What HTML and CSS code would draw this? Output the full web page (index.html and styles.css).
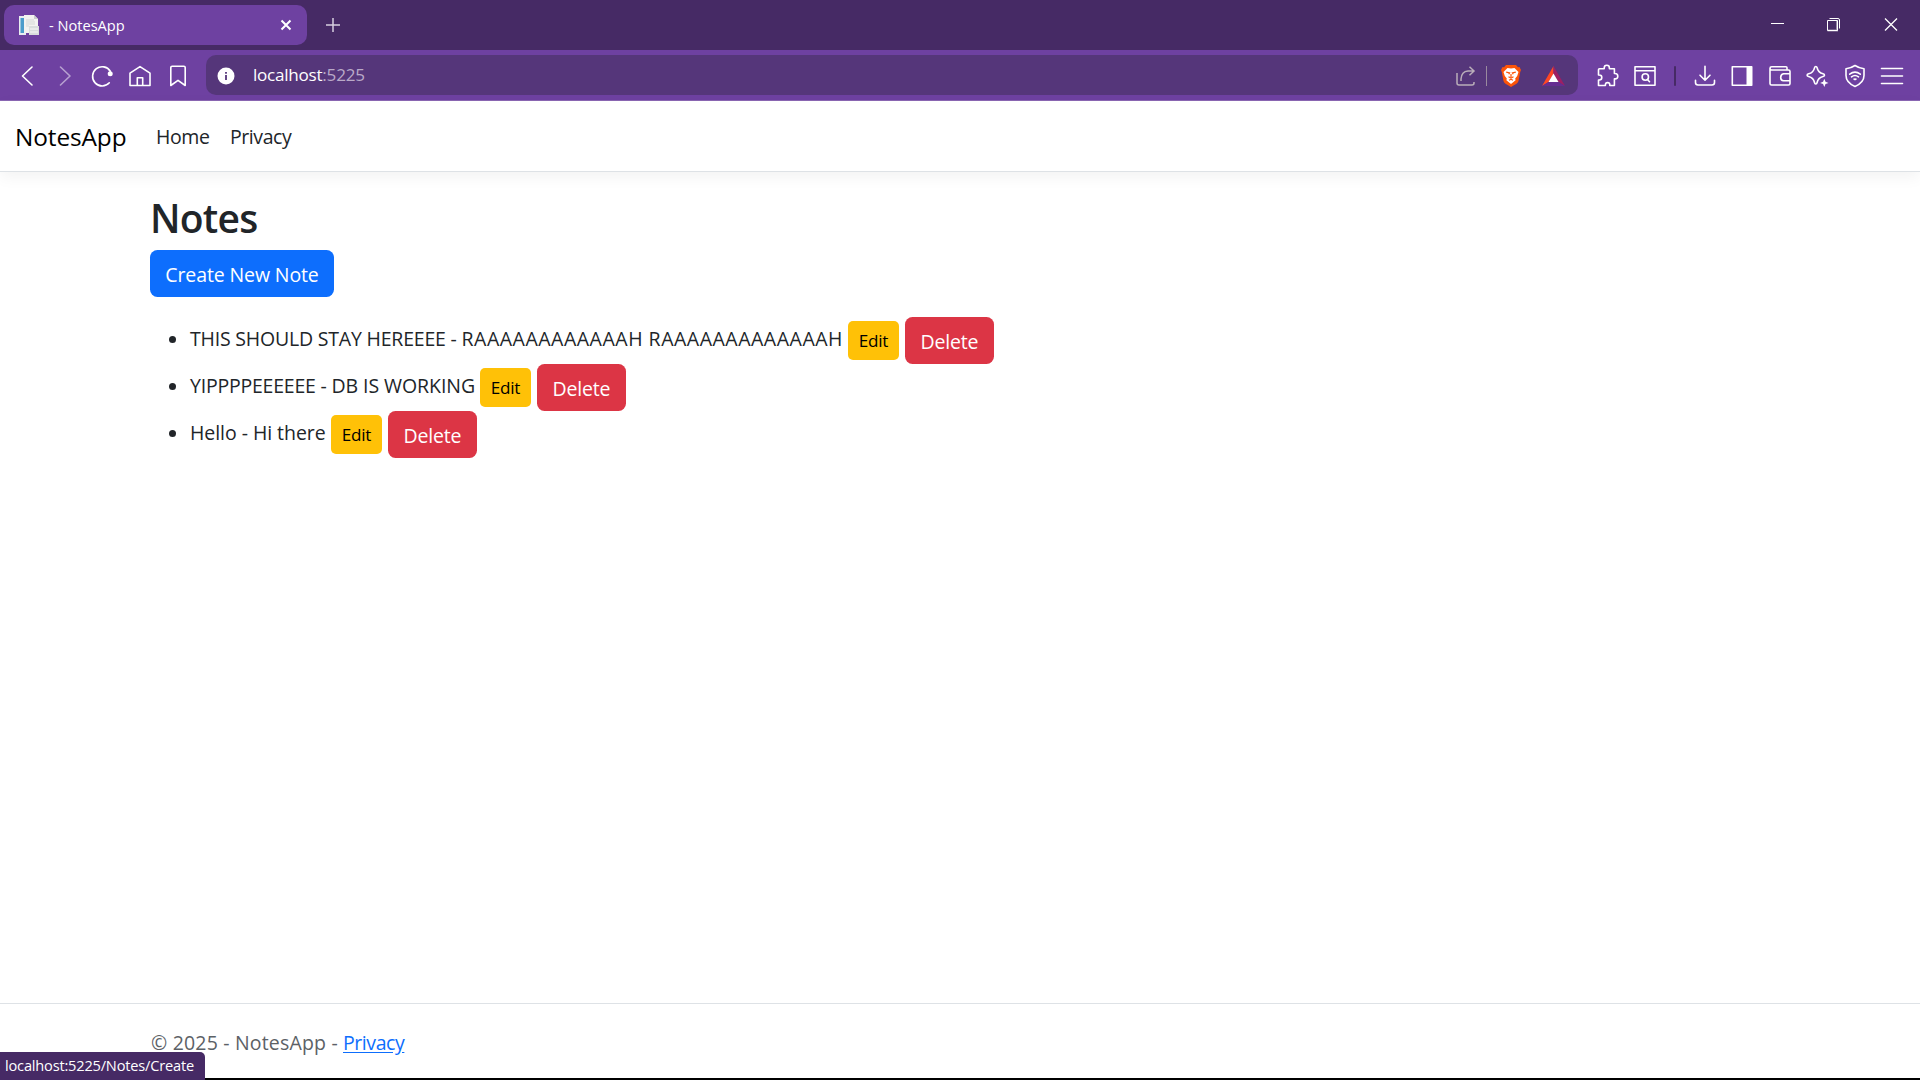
FILE: index.html
```
<!DOCTYPE html>
<html lang="en">
<head>
<meta charset="utf-8">
<title>- NotesApp</title>
<link rel="stylesheet" href="styles.css">
</head>
<body>
<div class="titlebar">
  <div class="tab">
    <svg class="favicon" width="20" height="20" viewBox="0 0 20 20"><path d="M0 1h7v19H0z" fill="#e9edf0"/><path d="M1.500 3H5v15H1.500z" fill="#4b9ccb"/><path d="M5 0h10l4 4v14H5z" fill="#f2f2f0"/><path d="M15 0v4h4z" fill="#c9cdcc"/><path d="M7 5h8M7 7h9M7 9h9M7 11h3" stroke="#d5d8d7"/><path d="M10 11h10v9H10z" fill="#d9dddd"/><path d="M11 14h8M11 17h8" stroke="#f7f7f7"/></svg>
    <span class="tab-title">- NotesApp</span>
    <svg class="tab-close" width="12" height="12" viewBox="0 0 12 12"><path d="M1.500 1.500l9 9M10.500 1.500l-9 9" stroke="#fff" stroke-width="2"/></svg>
  </div>
  <svg class="new-tab" width="14" height="14" viewBox="0 0 14 14"><path d="M0 7h14M7 0v14" stroke="#d8d0e0" stroke-width="1.500"/></svg>
  <div class="window-controls">
    <svg width="57" height="50" viewBox="0 0 57 50"><path d="M22 23.500h13" stroke="#fff"/></svg>
    <svg width="57" height="50" viewBox="0 0 57 50" fill="none" stroke="#fff"><path d="M31 20.500v10h-9.500" stroke="#9b8bab" stroke-width="2"/><path d="M21.500 20.500h10v10h-10zM23.500 18.500h8.500q1.500 0 1.500 1.500v8.500"/></svg>
    <svg width="57" height="50" viewBox="0 0 57 50"><path d="M22 18.500l12 12M34 18.500l-12 12" stroke="#fff" stroke-width="1.300"/></svg>
  </div>
</div>
<div class="toolbar">
  <div class="nav-icons">
    <svg viewBox="0 0 24 24"><path d="M17 3L7.500 12 17 21"/></svg>
    <svg class="dim" viewBox="0 0 24 24"><path d="M7.500 3L17 12 7.500 21"/></svg>
    <svg viewBox="0 0 24 24"><path d="M20.300 7.200A9.600 9.600 0 1 0 19.300 18.800"/><circle cx="20.200" cy="9.800" r="2.500" fill="#fff" stroke="none"/></svg>
    <svg viewBox="0 0 24 24"><path d="M2 9.200L12 2.600l10 6.600v12.300H2zM9.300 21.500v-7.700h5.400v7.700"/></svg>
    <svg viewBox="0 0 24 24"><path d="M4.800 3.500q0-1.300 1.300-1.300h11.800q1.300 0 1.300 1.300v18L12 16.300l-7.200 5.200z"/></svg>
  </div>
  <div class="address">
    <svg class="info" width="18" height="18" viewBox="0 0 18 18"><circle cx="9" cy="9" r="8.500" fill="#fff"/><path d="M9 8v5M9 5v1.800" stroke="#55367a" stroke-width="1.800"/></svg>
    <span class="host">localhost<span class="port">:5225</span></span>
    <svg class="share" width="20" height="20" viewBox="0 0 20 20" fill="none" stroke="#b9adb9" stroke-width="1.500"><path d="M1 7v10q0 2 2 2h13q2 0 2-2v-1M5 15V13Q5.500 5.500 12 5h6M13.500.800L18 5l-4.500 4.200"/></svg>
    <span class="address-sep"></span>
    <svg class="brave" width="20" height="23" viewBox="0 0 20 23"><path d="M5 1h10l2 2.300 1.500-.2L20 6l-.8 2-1.700 9q-.5 1.500-2 2.700L10 23l-5.500-3.300q-1.500-1.200-2-2.700L.8 8 0 6l1.500-2.900L3 3.300z" fill="#fb5408"/><path d="M6.500 4L10 4.600 13.500 4 17.500 8l-1.300 4-2 2.500.4 1.700L10 20l-4.600-3.800.4-1.700-2-2.500-1.300-4z" fill="#fff"/><path d="M5.200 8.200l3.400.7-.8 1.300M14.800 8.200l-3.400.7.8 1.300M10 10v3M7.500 12.700L10 14l2.500-1.300M8 16.300l2-1 2 1" fill="none" stroke="#fb5408" stroke-width="1.200"/></svg>
    <svg class="bat" width="23" height="20" viewBox="0 0 23 20"><path d="M11.500 0L0 20l6.500-4 5-8z" fill="#ff4724"/><path d="M11.500 0L23 20l-6.500-4-5-8z" fill="#9e1f63"/><path d="M0 20h23l-6.500-4h-10z" fill="#662d91"/><path d="M11.500 7.500L16.500 16h-10z" fill="#fff"/></svg>
  </div>
  <div class="tool-icons">
    <svg viewBox="0 0 24 24"><path d="M3.500 4.800h4.700V3.900a2.600 2.600 0 0 1 5.200 0v.9h5v4.700h.7a2.700 2.700 0 0 1 0 5.400h-.7v6.600h-4.600v-.7a2.200 2.200 0 0 0-4.400 0v.7H2.500V16h.8a2.200 2.200 0 0 0 0-5h-.8V5.800q0-1 1-1z"/></svg>
    <svg viewBox="0 0 24 24"><path d="M2 2.700h20v18.600H2zM2 6.700h20"/><circle cx="12.300" cy="13" r="3.200"/><path d="M14.500 15.500l2 2.200"/></svg>
    <span class="tool-sep"></span>
    <svg viewBox="0 0 24 24"><path d="M12 2.300v13.500M7 11.200l5 5 5-5M2.500 16.200v2.300q0 2.500 2.500 2.500h14q2.500 0 2.500-2.500v-2.300"/></svg>
    <svg viewBox="0 0 24 24"><path d="M2.300 2.700h19.400v18.600H2.300z"/><path d="M16.500 2.500H22v19h-5.500z" fill="#fff" stroke="none"/></svg>
    <svg viewBox="0 0 24 24"><path d="M2 4.200v15.300q0 1.500 1.500 1.500h17q1.500 0 1.500-1.500V7.500q0-1.500-1.500-1.500H3.700Q2 6 2 4.300q0-1.600 1.700-1.600H18q1 0 1 1V6M22 9.800h-6.500q-2.800.7-2.800 3.700 0 3 2.800 3.300H22"/></svg>
    <svg viewBox="0 0 24 24"><path d="M10.800 2.500q1 0 1.300 1.300c.7 3.300 2.200 5.100 5.900 6 2 .5 2 2.200 0 2.700-3.700.9-5.200 2.400-5.900 6-.4 2-2.200 2-2.600 0-.7-3.600-2.200-5.100-5.900-6-2-.5-2-2.200 0-2.700 3.700-.9 5.200-2.700 5.900-6q.3-1.300 1.300-1.300z"/><path d="M19.300 14.700l1.200 3 3 1.200-3 1.200-1.200 3-1.200-3-3-1.200 3-1.200z" fill="#fff" stroke="none"/></svg>
    <svg viewBox="0 0 24 24"><path d="M12 1.500q4 2.700 9 3.200v6.800q0 7-9 11-9-4-9-11V4.700q5-.5 9-3.200zM6.700 10.200q5.300-4.200 10.600 0M8.500 12.800q3.500-2.700 7 0"/><path d="M9.800 15q2.200-1.300 4.400 0L12 16.600z" fill="#fff" stroke="none"/></svg>
    <svg viewBox="0 0 24 24"><path d="M1.500 4.500h21M1.500 12h21M1.500 19.500h21"/></svg>
  </div>
</div>
<div class="page">
  <header class="navbar">
    <a class="brand">NotesApp</a>
    <a class="nav-link home">Home</a>
    <a class="nav-link privacy">Privacy</a>
  </header>
  <main class="content">
    <h1>Notes</h1>
    <a class="btn btn-primary">Create New Note</a>
    <ul class="notes">
      <li class="note note-long"><span class="note-text"><span class="note-title">THIS SHOULD STAY HEREEEE - </span>RAAAAAAAAAAAAH RAAAAAAAAAAAAAH</span><a class="btn btn-edit">Edit</a><a class="btn btn-delete">Delete</a></li>
      <li class="note note-medium"><span class="note-text"><span class="note-title">YIPPPPEEEEEE - </span>DB IS WORKING</span><a class="btn btn-edit">Edit</a><a class="btn btn-delete">Delete</a></li>
      <li class="note note-short"><span class="note-text">Hello - Hi there</span><a class="btn btn-edit">Edit</a><a class="btn btn-delete">Delete</a></li>
    </ul>
  </main>
  <footer class="footer"><span class="copyright">© 2025 - NotesApp -</span><a class="privacy footer-link">Privacy</a></footer>
</div>
<div class="taskbar-edge"></div>
<div class="status">localhost:5225/Notes/Create</div>
</body>
</html>
```
FILE: styles.css
```
* { box-sizing: border-box; }

body {
  display: flex;
  flex-direction: column;
  width: 1920px;
  height: 1080px;
  margin: 0;
  overflow: hidden;
  background: #fff;
  color: #212529;
  font: 19.5px/30px "Open Sans", "Noto Sans", sans-serif;
  white-space: nowrap;
}

svg { display: block; flex: none; }

/* Browser window */
.titlebar {
  display: flex;
  align-items: center;
  flex: none;
  height: 50px;
  padding-left: 4px;
  background: #462a65;
}
.tab {
  display: flex;
  align-items: center;
  width: 303px;
  height: 40px;
  padding: 0 15px;
  border-radius: 10px;
  background: #6e41a1;
  color: #fff;
}
.tab-title { margin: -1px 0 0 10px; font-size: 14.6px; }
.tab-close { margin-left: auto; }
.new-tab { margin-left: 19px; }
.window-controls { display: flex; margin-left: auto; }

.toolbar {
  display: flex;
  align-items: center;
  flex: none;
  height: 51px;
  padding: 0 9px 0 8px;
  border-bottom: 1px solid #8b67b4;
  background: #6e41a1;
}
.nav-icons, .tool-icons {
  display: flex;
  align-items: center;
  padding-top: 1px;
  fill: none;
  stroke: #fff;
  stroke-width: 1.6;
  stroke-linejoin: round;
  stroke-linecap: round;
}
.nav-icons svg { width: 24px; height: 24px; margin: 0 6.9px; }
.tool-icons svg { width: 24px; height: 24px; margin: 0 6.75px; }
.dim { opacity: .5; }
.tool-icons { margin-left: auto; }
.tool-sep { width: 2px; height: 20px; margin: 0 10px; border-radius: 1px; background: #462a65; }

.address {
  display: flex;
  align-items: center;
  width: 1372px;
  height: 40px;
  margin-left: 9px;
  padding: 1px 13px 0 11px;
  border-radius: 10px;
  background: #55367a;
}
.host {
  margin: -2px 0 0 18px;
  color: #fff;
  font-size: 17.1px;
  letter-spacing: -.24px;
}
.port { color: #b9a9c8; }
.share { margin-left: auto; }
.address-sep { width: 1px; height: 20px; margin: 0 14px 0 10px; background: #9a8a9e; }
.bat { margin-left: 21px; }

/* Web page */
.page { display: flex; flex: 1; flex-direction: column; }
.navbar {
  display: flex;
  align-items: center;
  height: 71px;
  padding: 2px 15px 0;
  border-bottom: 1px solid #dee2e6;
  box-shadow: 0 5px 15px rgba(0, 0, 0, .05);
}
.brand { width: 141px; color: #000; font-size: 24.4px; letter-spacing: -.1px; }
.nav-link.home { width: 74px; letter-spacing: -.39px; }
.privacy { letter-spacing: -.42px; }

.content { flex: 1; padding: 22px 150px 0; }
h1 {
  height: 48px;
  margin: 0 0 8px;
  font-size: 39px;
  font-weight: 600;
  line-height: 48px;
  letter-spacing: -.75px;
}
.btn {
  display: flex;
  align-items: center;
  justify-content: center;
  flex: none;
  border-radius: 7.5px;
  color: #fff;
}
.btn-primary {
  width: 184px;
  height: 47px;
  padding-top: 2px;
  background: #0d6efd;
  letter-spacing: -.12px;
}
.notes { margin: 20px 0 0; padding: 0; list-style: none; }
.note { display: flex; align-items: center; height: 47px; padding-left: 18px; }
.note::before {
  width: 7px;
  height: 7px;
  margin: -3px 14px 0 1px;
  border-radius: 50%;
  background: #212529;
  content: "";
}
.note-text { margin: -4px 7px 0 0; }
.note-long .note-text { width: 651px; letter-spacing: .51px; }
.note-long .note-title { letter-spacing: -.2px; }
.note-medium .note-text { width: 283px; letter-spacing: -.06px; }
.note-medium .note-title { letter-spacing: -.22px; }
.note-short .note-text { width: 134px; letter-spacing: -.05px; }
.btn-edit {
  width: 51px;
  height: 39px;
  border-radius: 5px;
  background: #ffc107;
  color: #000;
  font-size: 17.1px;
  letter-spacing: -.23px;
}
.btn-delete {
  width: 89px;
  height: 47px;
  margin-left: 6px;
  padding-top: 2px;
  background: #dc3545;
  letter-spacing: -.18px;
}

.footer {
  display: flex;
  height: 75px;
  padding: 24px 151px 0;
  border-top: 1px solid #dee2e6;
}
.copyright { width: 192px; color: #5c6166; letter-spacing: .18px; }
.footer-link {
  color: #0d6efd;
  text-decoration: underline;
  text-underline-offset: 2px;
}

.taskbar-edge { flex: none; height: 2px; background: #000; }
.status {
  position: absolute;
  bottom: 0;
  left: 0;
  width: 205px;
  height: 28px;
  padding-left: 5px;
  border-radius: 0 5px 0 0;
  background: #462a65;
  color: #fff;
  font-size: 14.6px;
  line-height: 27px;
  letter-spacing: -.19px;
}
```
